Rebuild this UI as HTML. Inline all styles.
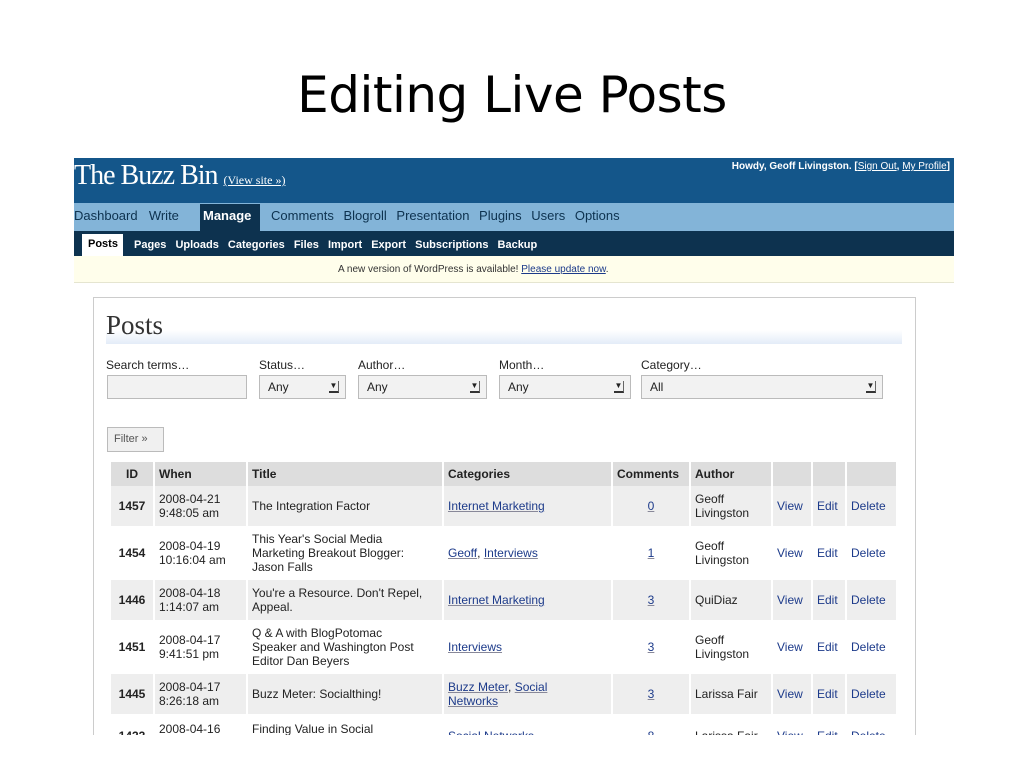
<!DOCTYPE html>
<html><head><style>
*{margin:0;padding:0;box-sizing:border-box}
body{width:1024px;height:768px;background:#fff;position:relative;overflow:hidden;font-family:"Liberation Sans",sans-serif}
.a{position:absolute;white-space:nowrap}
h1{position:absolute;left:0;width:1024px;top:66px;text-align:center;font-family:"DejaVu Sans","Liberation Sans",sans-serif;font-weight:normal;font-size:50px;color:#000;letter-spacing:-0.5px}
#shot{position:absolute;left:74px;top:158px;width:880px;height:577px;overflow:hidden;background:#fff}
.lk{color:#1c3a8a;text-decoration:underline;text-decoration-color:#889}
table{position:absolute;left:35px;top:304px;border-collapse:separate;border-spacing:2px 0;font-size:12px;color:#222}
td,th{padding:2px 4px;vertical-align:middle;line-height:14px}
th{background:#ddd;text-align:left;height:24px;font-weight:bold;color:#222}
tr.o td{background:#eee}
td.id{font-weight:bold;text-align:center}
td.c{text-align:center}
td.v{color:#1c3a8a}
.sel{position:absolute;height:24px;top:217px;background:#f2f2f2;border:1px solid #bbb;font-size:12px;padding:4px 8px;color:#222}
.sel b{position:absolute;right:6px;top:5px;width:10px;height:12px;border-bottom:2px solid #333;border-right:1px solid #666;font-size:8px;text-align:center;line-height:10px;font-weight:normal}
.lbl{position:absolute;top:200px;font-size:12px;color:#222}
</style></head><body>
<h1>Editing Live Posts</h1>
<div id="shot">
 <div class="a" style="left:0;top:0;width:880px;height:45px;background:#14568a"></div>
 <div class="a" style="left:0;top:0;font-family:'Liberation Serif',serif;font-size:28px;color:#fff;letter-spacing:-1px;top:2px">The Buzz Bin <span style="font-size:12px;letter-spacing:0;text-decoration:underline">(View site »)</span></div>
 <div class="a" style="right:4px;top:3px;font-size:10px;color:#fff;font-weight:bold">Howdy, Geoff Livingston. [<u style="font-weight:normal">Sign Out</u>, <u style="font-weight:normal">My Profile</u>]</div>
 <div class="a" style="left:0;top:45px;width:880px;height:28px;background:#83b4d8"></div>
 <div class="a" style="left:0;top:50px;font-size:13px;color:#0d324f;word-spacing:2px">Dashboard&nbsp; Write</div>
 <div class="a" style="left:126px;top:46px;height:27px;width:60px;background:#0d324f;color:#fff;font-weight:bold;font-size:13px;padding:4px 3px">Manage</div>
 <div class="a" style="left:197px;top:50px;font-size:13px;color:#0d324f;word-spacing:6px">Comments Blogroll Presentation Plugins Users Options</div>
 <div class="a" style="left:0;top:73px;width:880px;height:25px;background:#0d324f"></div>
 <div class="a" style="left:8px;top:76px;height:22px;width:41px;background:#fff;font-size:11px;font-weight:bold;padding:4px 6px;color:#000">Posts</div>
 <div class="a" style="left:60px;top:81px;font-size:11px;font-weight:bold;color:#fff;word-spacing:6px">Pages Uploads Categories Files Import Export Subscriptions Backup</div>
 <div class="a" style="left:0;top:98px;width:880px;height:27px;background:#fffeeb;border-bottom:1px solid #e5e5d0"></div>
 <div class="a" style="left:264px;top:106px;font-size:10px;color:#333">A new version of WordPress is available! <span style="color:#1c3a8a;text-decoration:underline">Please update now</span>.</div>
 <div class="a" style="left:19px;top:139px;width:823px;height:460px;border:1px solid #ccc;border-bottom:none"></div>
 <div class="a" style="left:32px;top:172px;width:796px;height:14px;background:linear-gradient(#fff,#e3ecf8)"></div>
 <div class="a" style="left:32px;top:152px;font-family:'Liberation Serif',serif;font-size:27px;color:#333">Posts</div>
 <div class="lbl" style="left:32px">Search terms…</div>
 <div class="lbl" style="left:185px">Status…</div>
 <div class="lbl" style="left:284px">Author…</div>
 <div class="lbl" style="left:425px">Month…</div>
 <div class="lbl" style="left:567px">Category…</div>
 <div class="a" style="left:33px;top:217px;width:140px;height:24px;border:1px solid #bbb;background:#f2f2f2"></div>
 <div class="sel" style="left:185px;width:87px">Any<b>▼</b></div>
 <div class="sel" style="left:284px;width:129px">Any<b>▼</b></div>
 <div class="sel" style="left:425px;width:132px">Any<b>▼</b></div>
 <div class="sel" style="left:567px;width:242px">All<b>▼</b></div>
 <div class="a" style="left:33px;top:269px;width:57px;height:25px;border:1px solid #bbb;background:#f0f0f0;font-size:11px;color:#555;padding:5px 6px">Filter »</div>
 <table>
  <tr><th style="width:42px;text-align:center">ID</th><th style="width:91px">When</th><th style="width:194px">Title</th><th style="width:167px">Categories</th><th style="width:76px">Comments</th><th style="width:80px">Author</th><th style="width:38px"></th><th style="width:32px"></th><th style="width:49px"></th></tr>
  <tr class="o" style="height:40px"><td class="id">1457</td><td>2008-04-21<br>9:48:05 am</td><td>The Integration Factor</td><td><span class="lk">Internet Marketing</span></td><td class="c"><span class="lk">0</span></td><td>Geoff<br>Livingston</td><td class="v">View</td><td class="v">Edit</td><td class="v">Delete</td></tr>
  <tr style="height:54px"><td class="id">1454</td><td>2008-04-19<br>10:16:04 am</td><td>This Year's Social Media<br>Marketing Breakout Blogger:<br>Jason Falls</td><td><span class="lk">Geoff</span>, <span class="lk">Interviews</span></td><td class="c"><span class="lk">1</span></td><td>Geoff<br>Livingston</td><td class="v">View</td><td class="v">Edit</td><td class="v">Delete</td></tr>
  <tr class="o" style="height:40px"><td class="id">1446</td><td>2008-04-18<br>1:14:07 am</td><td>You're a Resource. Don't Repel,<br>Appeal.</td><td><span class="lk">Internet Marketing</span></td><td class="c"><span class="lk">3</span></td><td>QuiDiaz</td><td class="v">View</td><td class="v">Edit</td><td class="v">Delete</td></tr>
  <tr style="height:54px"><td class="id">1451</td><td>2008-04-17<br>9:41:51 pm</td><td>Q &amp; A with BlogPotomac<br>Speaker and Washington Post<br>Editor Dan Beyers</td><td><span class="lk">Interviews</span></td><td class="c"><span class="lk">3</span></td><td>Geoff<br>Livingston</td><td class="v">View</td><td class="v">Edit</td><td class="v">Delete</td></tr>
  <tr class="o" style="height:40px"><td class="id">1445</td><td>2008-04-17<br>8:26:18 am</td><td>Buzz Meter: Socialthing!</td><td><span class="lk">Buzz Meter</span>, <span class="lk">Social<br>Networks</span></td><td class="c"><span class="lk">3</span></td><td>Larissa Fair</td><td class="v">View</td><td class="v">Edit</td><td class="v">Delete</td></tr>
  <tr style="height:44px"><td class="id">1433</td><td>2008-04-16<br>1:00:00 am</td><td>Finding Value in Social<br>Networks</td><td><span class="lk">Social Networks</span></td><td class="c"><span class="lk">8</span></td><td>Larissa Fair</td><td class="v">View</td><td class="v">Edit</td><td class="v">Delete</td></tr>
 </table>
</div>
</body></html>
